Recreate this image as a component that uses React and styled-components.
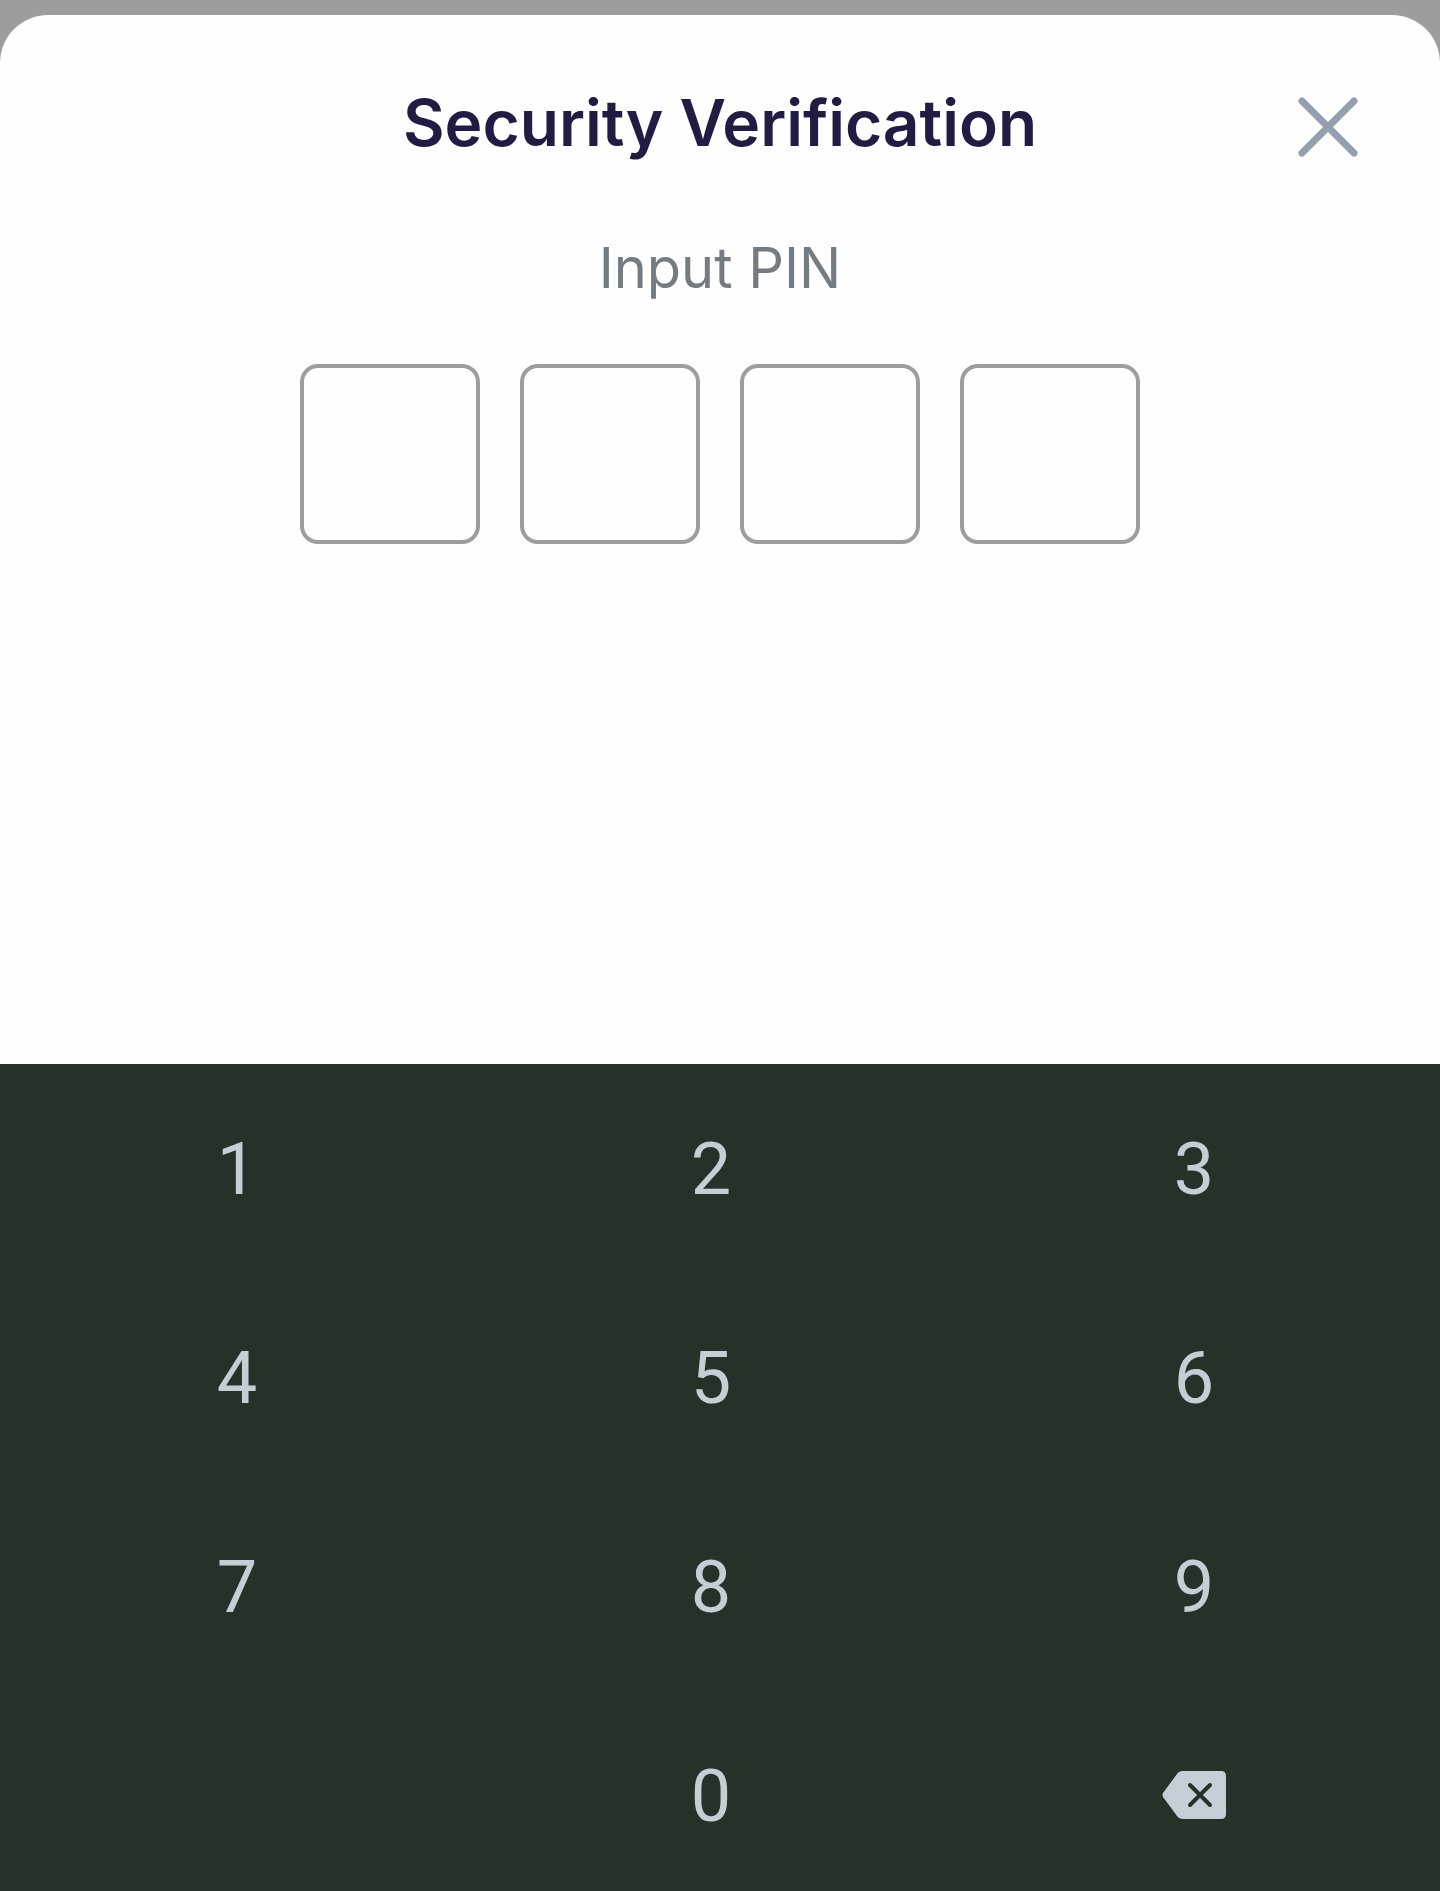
import React, { useState } from "react";
import styled, { createGlobalStyle } from "styled-components";

const GlobalStyle = createGlobalStyle`
  * { box-sizing: border-box; }
  html, body { margin: 0; }
  body { background: #9d9d9d; font-family: Inter, "Noto Sans", sans-serif; }
`;

const Screen = styled.div`
  display: flex;
  flex-direction: column;
  min-height: 100vh;
  padding-top: 15px;
`;

const Sheet = styled.main`
  flex: 1;
  display: flex;
  flex-direction: column;
  background: #fefefe;
  border-radius: 48px 48px 0 0;
  overflow: hidden;
`;

const Header = styled.header`
  display: grid;
  grid-template-columns: 72px 1fr 72px;
  align-items: end;
  padding: 68px 76px 0;
`;

const Title = styled.h1`
  grid-column: 2;
  margin: 0;
  text-align: center;
  color: #211c42;
  font-size: 64px;
  line-height: 80px;
  font-weight: 600;
`;

const CloseButton = styled.button`
  display: flex;
  padding: 0;
  border: 0;
  background: none;
  color: #94a0ad;
  cursor: pointer;
`;

const PinForm = styled.form`
  flex: 1;
  margin: 0;
`;

const PinFields = styled.fieldset`
  min-width: 0;
  margin: 0;
  padding: 0;
  border: 0;
`;

const PinLabel = styled.legend`
  width: 100%;
  padding: 69px 0 60px;
  text-align: center;
  color: #747c82;
  font-size: 56px;
  line-height: 72px;
`;

const PinRow = styled.div`
  display: flex;
  justify-content: center;
  gap: 40px;
`;

const PinBox = styled.input`
  width: 180px;
  height: 180px;
  padding: 0;
  border: 4px solid #9d9d9d;
  border-radius: 18px;
  background: transparent;
  text-align: center;
  font-size: 72px;
  color: #211c42;
`;

const Keypad = styled.section`
  display: grid;
  grid-template-columns: 474fr 474fr 492fr;
  grid-template-rows: repeat(3, 209px) 200px;
  background: #253229;
`;

const Key = styled.button`
  grid-column: ${(p) => p.$column};
  display: flex;
  align-items: flex-start;
  justify-content: center;
  padding: ${(p) => (p.$icon ? 80 : 64)}px 0 0;
  border: 0;
  background: none;
  color: #c4cfd5;
  font-family: Roboto, sans-serif;
  font-size: 72px;
  line-height: 84px;
  cursor: pointer;
`;

const digits = ["1", "2", "3", "4", "5", "6", "7", "8", "9", "0"];

export default function App() {
  const [pin, setPin] = useState("");
  const press = (digit) => setPin((value) => (value + digit).slice(0, 4));
  return (
    <>
      <GlobalStyle />
      <Screen>
        <Sheet>
          <Header>
            <Title>Security Verification</Title>
            <CloseButton type="button" aria-label="Close">
              <svg width="72" height="72" viewBox="0 0 72 72" fill="none" stroke="currentColor" strokeWidth="7" strokeLinecap="round">
                <path d="M10 10 62 62M62 10 10 62" />
              </svg>
            </CloseButton>
          </Header>
          <PinForm>
            <PinFields>
              <PinLabel>Input PIN</PinLabel>
              <PinRow>
                {[0, 1, 2, 3].map((i) => (
                  <PinBox key={i} type="password" inputMode="none" readOnly aria-label={`PIN digit ${i + 1}`} value={pin[i] || ""} />
                ))}
              </PinRow>
            </PinFields>
          </PinForm>
          <Keypad aria-label="Number keypad">
            {digits.map((digit) => (
              <Key key={digit} type="button" $column={digit === "0" ? 2 : "auto"} onClick={() => press(digit)}>
                {digit}
              </Key>
            ))}
            <Key type="button" $icon $column={3} aria-label="Delete" onClick={() => setPin((value) => value.slice(0, -1))}>
              <svg width="64" height="48" viewBox="0 0 64 48" fill="none">
                <path d="M1 22 15 3Q17 0 21 0H59Q64 0 64 5V43Q64 48 59 48H21Q17 48 15 45L1 26Q0 24 1 22Z" fill="currentColor" />
                <path d="M28 14 48 34M48 14 28 34" stroke="#253229" strokeWidth="4" strokeLinecap="round" />
              </svg>
            </Key>
          </Keypad>
        </Sheet>
      </Screen>
    </>
  );
}
